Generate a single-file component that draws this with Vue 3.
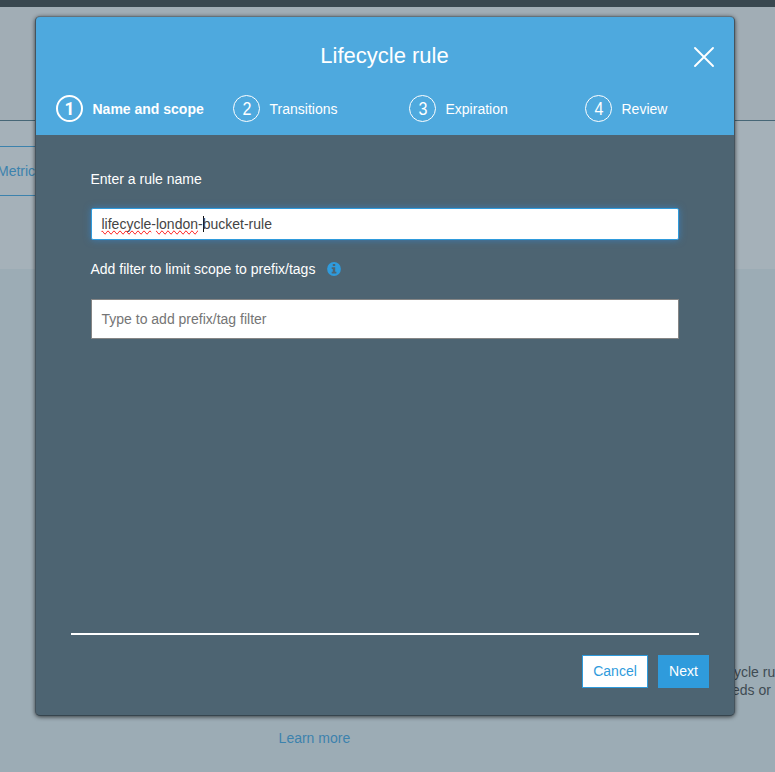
<script setup>
import { ref } from 'vue'

const current = ref(1)
const steps = [
  { id: 1, label: 'Name and scope' },
  { id: 2, label: 'Transitions' },
  { id: 3, label: 'Expiration' },
  { id: 4, label: 'Review' }
]
</script>

<template>
  <div class="page">
    <div class="backdrop">
      <div class="topbar"></div>
      <div class="heading"></div>
      <div class="tabs">
        <div class="tab">Metrics</div>
      </div>
      <div class="content">
        <div class="blurb">
          <p>ycle ru</p>
          <p>eds or</p>
        </div>
        <a class="learn">Learn more</a>
      </div>
    </div>

    <section class="dialog" role="dialog">
      <header class="header">
        <div class="title-row">
          <h1>Lifecycle rule</h1>
          <button class="close" aria-label="Close">
            <svg width="22" height="22" viewBox="0 0 22 22">
              <path d="M2 2L20 20M20 2L2 20" stroke="#fff" stroke-width="1.9" stroke-linecap="round" />
            </svg>
          </button>
        </div>
        <ol class="steps">
          <li v-for="s in steps" :key="s.id" class="step" :class="{ active: s.id === current }">
            <span class="num"><span class="digit">{{ s.id }}</span></span>
            <span class="step-label">{{ s.label }}</span>
          </li>
        </ol>
      </header>

      <div class="body">
        <div class="label">Enter a rule name</div>
        <div class="input focused"><span class="misspelt">lifecycle</span>-<span class="misspelt">london</span>-<i class="caret"></i>bucket-rule</div>
        <div class="label second">
          Add filter to limit scope to prefix/tags
          <svg class="info" width="14" height="14" viewBox="0 0 14 14">
            <circle cx="7" cy="7" r="6.9" fill="#2f9bdc" />
            <path d="M5.8 2h2.4v2.1H5.8zM4.7 5.2h3.5v4.5h1.2v1.8H4.7V9.7h1.1V7H4.7z" fill="#4d6472" />
          </svg>
        </div>
        <div class="input filter">Type to add prefix/tag filter</div>
      </div>

      <footer class="footer">
        <button class="btn cancel">Cancel</button>
        <button class="btn next">Next</button>
      </footer>
    </section>
  </div>
</template>

<style>
body {
  margin: 0;
  overflow: hidden;
}
</style>

<style scoped>
* {
  box-sizing: border-box;
}
.page {
  position: relative;
  width: 775px;
  height: 772px;
  overflow: hidden;
  font: 14px/18px "Liberation Sans", Arial, sans-serif;
}
.backdrop {
  display: flex;
  flex-direction: column;
  height: 100%;
  background: #9cacb5;
}
.topbar {
  height: 7px;
  background: #39474f;
}
.heading {
  height: 114px;
  background: #a1adb5;
  border-bottom: 1px solid #476777;
}
.tabs {
  height: 148px;
  padding-top: 25px;
  background: #a5b1b9;
}
.tab {
  width: 120px;
  height: 50px;
  line-height: 48px;
  text-indent: -3px;
  color: #3c82ad;
  border-top: 1px solid #3c82ad;
  border-bottom: 1px solid #3c82ad;
}
.content {
  flex: 1;
  display: flex;
  flex-direction: column;
  padding: 394px 0 0;
}
.blurb {
  margin-left: 734px;
  white-space: nowrap;
  color: #3f4b53;
}
.blurb p {
  margin: 0;
}
.blurb p + p {
  text-indent: -2px;
}
.learn {
  margin: 30px 0 0 278.6px;
  color: #3c82ad;
}
.dialog {
  position: absolute;
  left: 35px;
  top: 16px;
  width: 700px;
  height: 700px;
  display: flex;
  flex-direction: column;
  color: #fff;
  background: #4d6472;
  border: 1px solid #45535d;
  border-top-color: #64727b;
  border-bottom-color: #36454e;
  border-radius: 5px;
  box-shadow: 0 1px 4px rgba(0, 0, 0, 0.65);
}
.header {
  height: 118px;
  background: #4ea9de;
  border-radius: 4px 4px 0 0;
}
.title-row {
  display: grid;
  grid-template-columns: 60px 1fr 60px;
  align-items: center;
  height: 78px;
}
h1 {
  grid-column: 2;
  margin: 0;
  padding-right: 1px;
  text-align: center;
  font-size: 22px;
  line-height: 28px;
  font-weight: 400;
}
.close {
  width: 22px;
  height: 22px;
  margin-top: 2px;
  margin-left: 19px;
  padding: 0;
  border: 0;
  background: none;
}
.close svg {
  display: block;
}
.steps {
  display: grid;
  grid-template-columns: 177px 176px 176px 1fr;
  margin: 0;
  padding: 0 0 0 20px;
  list-style: none;
}
.step {
  display: flex;
  align-items: center;
  height: 27px;
}
.num {
  display: flex;
  align-items: center;
  justify-content: center;
  width: 27px;
  height: 27px;
  margin-right: 9.5px;
  border: 1px solid #fff;
  border-radius: 50%;
  font-family: Roboto, "Liberation Sans", sans-serif;
  font-size: 17.5px;
}
.step:not(.active) .num {
  font-family: "Liberation Sans", Arial, sans-serif;
  font-size: 17.5px;
}
.step:not(.active) .digit {
  transform: scaleX(0.92);
}
.active .num {
  border-width: 2px;
}
.active {
  font-weight: 700;
}
.step-label {
  padding-top: 1px;
}
.body {
  flex: 1;
  margin: 0 35px;
  padding: 35px 20px 0;
  border-bottom: 2px solid #fff;
}
.label {
  display: flex;
  align-items: center;
  height: 18px;
  margin-left: -0.5px;
}
.second {
  margin-top: 20px;
}
.info {
  margin-left: 12px;
}
.input {
  height: 32px;
  margin-top: 20px;
  padding: 0 9.5px;
  line-height: 30px;
  color: #444;
  background: #fff;
  border: 1px solid #858585;
}
.focused {
  border-color: #2f9bdc;
  border-radius: 2px;
  box-shadow: 0 0 7px rgba(50, 140, 220, 0.6);
}
.misspelt {
  text-decoration-line: spelling-error;
}
.caret {
  display: inline-block;
  width: 1px;
  height: 16px;
  margin-right: -1px;
  vertical-align: -3px;
  background: #111;
}
.filter {
  height: 40px;
  margin-top: 21px;
  line-height: 38px;
  color: #757575;
}
.footer {
  display: flex;
  justify-content: flex-end;
  gap: 10px;
  height: 80px;
  padding: 20px 25px 0 0;
}
.btn {
  height: 33px;
  padding: 0 0 2px;
  font: inherit;
  color: #fff;
  background: #2f9bdc;
  border: 1px solid #2f9bdc;
}
.cancel {
  width: 66px;
  color: #2f9bdc;
  background: #fff;
}
.next {
  width: 51px;
}
</style>
